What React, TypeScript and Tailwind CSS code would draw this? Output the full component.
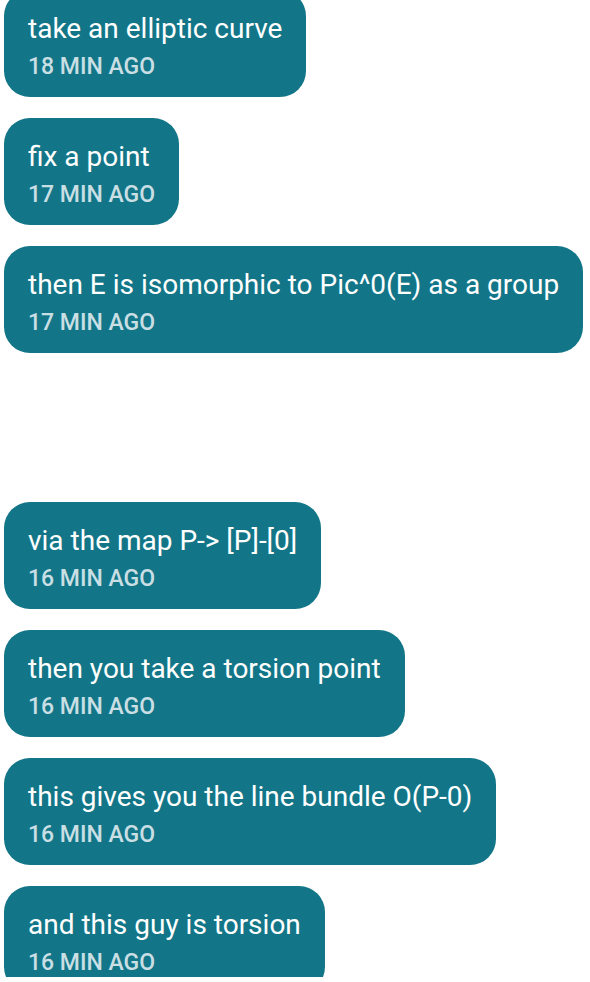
import React from "react";

type Msg = { text: string; time: string; gapBefore?: boolean };

const messages: Msg[] = [
  { text: "take an elliptic curve", time: "18 MIN AGO" },
  { text: "fix a point", time: "17 MIN AGO" },
  { text: "then E is isomorphic to Pic^0(E) as a group", time: "17 MIN AGO" },
  { text: "via the map P-> [P]-[0]", time: "16 MIN AGO", gapBefore: true },
  { text: "then you take a torsion point", time: "16 MIN AGO" },
  { text: "this gives you the line bundle O(P-0)", time: "16 MIN AGO" },
  { text: "and this guy is torsion", time: "16 MIN AGO" },
];

const App = () => {
  return (
    <div className="h-[977px] overflow-hidden bg-white font-['Roboto',sans-serif]">
      <div className="-mt-[10px] flex flex-col items-start gap-[21px] px-[4px]">
        {messages.map((m, i) => (
          <div
            key={i}
            className={`rounded-[26px] bg-[#137688] px-[24px] pt-[21px] pb-[14px] ${
              m.gapBefore ? "mt-[128px]" : ""
            }`}
          >
            <p className="text-[28px] leading-[36px] text-white">{m.text}</p>
            <p className="mt-[4px] text-[23px] font-medium leading-[32px] text-[#c9dfe4]">
              {m.time}
            </p>
          </div>
        ))}
      </div>
    </div>
  );
};

export default App;
